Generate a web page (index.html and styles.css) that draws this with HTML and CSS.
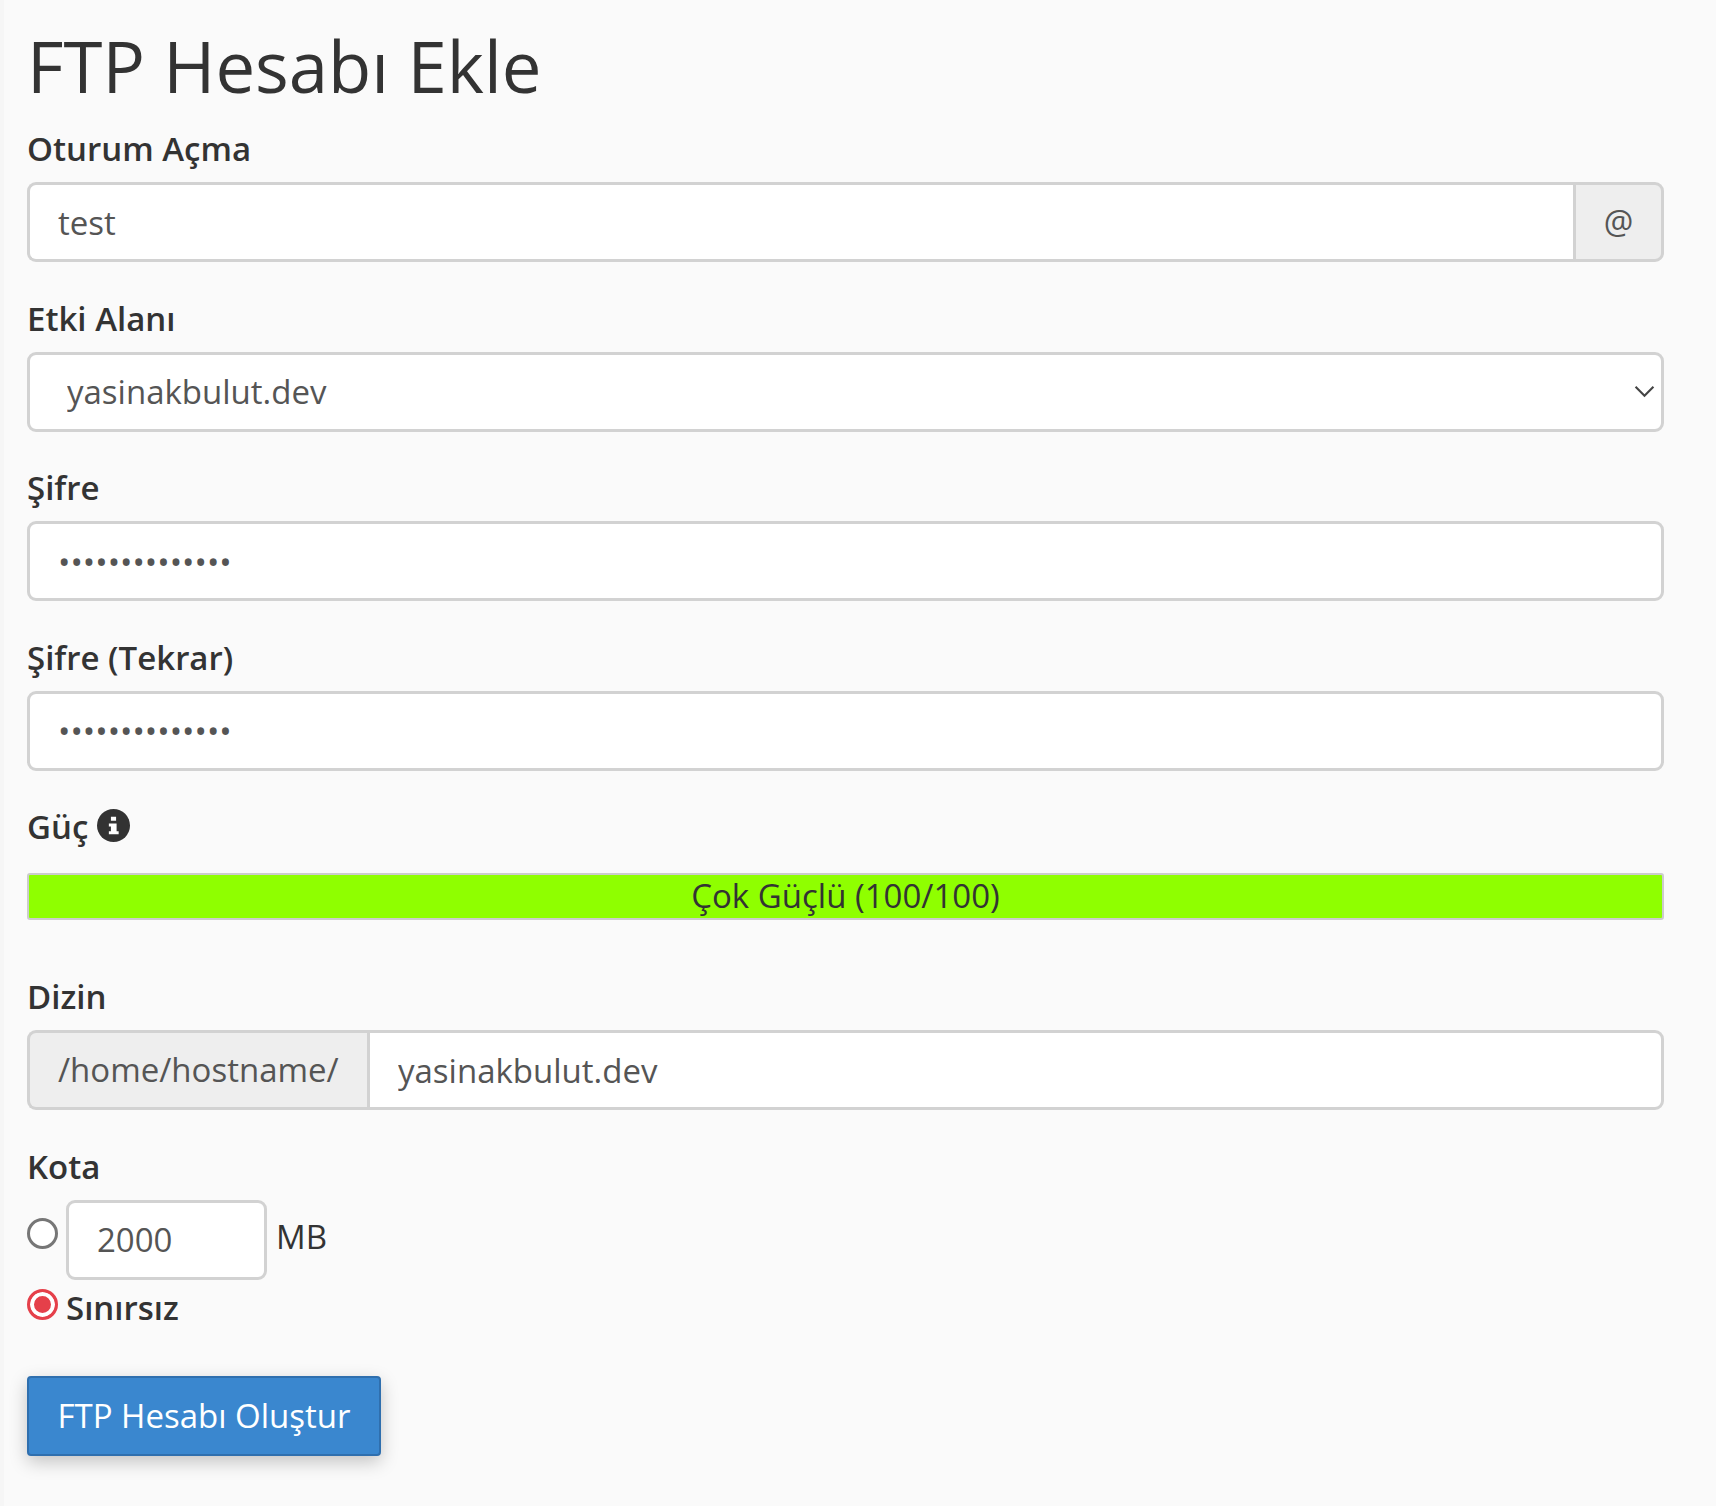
FILE: index.html
```html
<!DOCTYPE html>
<html lang="tr">
<head>
<meta charset="utf-8">
<title>FTP Hesabı Ekle</title>
<link rel="stylesheet" href="styles.css">
</head>
<body>
<main class="page">
  <h1 class="title">FTP Hesabı Ekle</h1>
  <form class="form">
    <div class="group">
      <label class="label" for="login">Oturum Açma</label>
      <div class="input-group">
        <input class="control joined-right" id="login" type="text" value="test">
        <span class="addon addon-right">@</span>
      </div>
    </div>
    <div class="group">
      <label class="label" for="domain">Etki Alanı</label>
      <div class="select-wrap">
        <select class="control select" id="domain"><option>yasinakbulut.dev</option></select>
        <svg class="chevron" viewBox="0 0 20 12" aria-hidden="true"><path d="M1.5 1.5 10 10l8.5-8.5" fill="none" stroke="#444" stroke-width="2"/></svg>
      </div>
    </div>
    <div class="group">
      <label class="label" for="pass">Şifre</label>
      <input class="control" id="pass" type="password" value="aaaaaaaaaaaaaa">
    </div>
    <div class="group">
      <label class="label" for="pass2">Şifre (Tekrar)</label>
      <input class="control" id="pass2" type="password" value="aaaaaaaaaaaaaa">
    </div>
    <div class="group group-strength">
      <div class="label label-icon">Güç
        <svg class="info" viewBox="0 0 32 32" aria-hidden="true">
          <circle cx="16" cy="16" r="16" fill="#333"/>
          <path d="M13.500 7.500h5v4h-5zM11.500 14H19v7.500h2v3H11.500v-3h2V17h-2z" fill="#fff"/>
        </svg>
      </div>
      <div class="meter">Çok Güçlü (100/100)</div>
    </div>
    <div class="group">
      <label class="label" for="dir">Dizin</label>
      <div class="input-group">
        <span class="addon addon-left">/home/hostname/</span>
        <input class="control joined-left" id="dir" type="text" value="yasinakbulut.dev">
      </div>
    </div>
    <div class="group group-quota">
      <div class="label">Kota</div>
      <div class="quota-row">
        <span class="radio"></span>
        <input class="control quota-input" type="text" value="2000" aria-label="Kota">
        <span class="unit">MB</span>
      </div>
      <div class="unlimited-row">
        <span class="radio radio-on"></span>
        <span class="unlimited">Sınırsız</span>
      </div>
    </div>
    <button class="btn" type="button">FTP Hesabı Oluştur</button>
  </form>
</main>
</body>
</html>
```
FILE: styles.css
```css
* { box-sizing: border-box; }
html, body { margin: 0; padding: 0; }
body {
  width: 1716px;
  height: 1506px;
  overflow: hidden;
  background: #fafafa;
  border-left: 4px solid #f6f6f6;
  color: #333;
  font-family: "Open Sans", "Noto Sans", sans-serif;
  font-size: 33px;
  line-height: 44px;
  font-variant-ligatures: none;
}
.page { padding: 0 52px 0 23px; }
.title {
  margin: 0;
  padding-top: 24px;
  font-size: 70.7px;
  font-weight: 400;
  line-height: 84px;
  height: 127px;
}
.form { display: flex; flex-direction: column; }
.group { margin-bottom: 34.6px; }
.label {
  display: block;
  height: 44px;
  margin-bottom: 11px;
  font-weight: 600;
  color: #333;
}
.control {
  display: block;
  width: 100%;
  height: 80px;
  padding: 0 28px;
  background: #fff;
  border: 3px solid #d2d2d2;
  border-radius: 9px;
  color: #555;
  font: 400 33px "Open Sans", "Noto Sans", sans-serif;
  outline: none;
}
.input-group { display: flex; }
.joined-right { flex: 1; border-radius: 9px 0 0 9px; border-right: 0; }
.joined-left { flex: 1; border-radius: 0 9px 9px 0; }
.addon {
  display: flex;
  align-items: center;
  height: 80px;
  background: #eee;
  border: 3px solid #d2d2d2;
  color: #555;
  font-size: 33px;
}
.addon-right {
  width: 91px;
  justify-content: center;
  border-radius: 0 9px 9px 0;
}
.addon-left {
  width: 340px;
  padding-left: 28px;
  border-right: 0;
  border-radius: 9px 0 0 9px;
}
.select-wrap { position: relative; }
.select { appearance: none; -webkit-appearance: none; padding-left: 37px; }
.chevron { position: absolute; right: 9px; top: 33px; width: 21px; height: 13px; }
.group-strength { margin-bottom: 55px; }
.label-icon { display: flex; align-items: center; gap: 9px; margin-bottom: 24px; }
.info { width: 33px; height: 33px; margin-top: -4px; }
.meter {
  height: 47px;
  line-height: 41px;
  text-align: center;
  background: #8fff00;
  border: 2px solid #ccc;
  border-radius: 3px;
  color: #333;
  font-size: 33px;
}
.quota-row { display: flex; align-items: center; height: 80px; }
.radio {
  flex: none;
  width: 31px;
  height: 31px;
  margin-right: 8px;
  border: 3px solid #767676;
  border-radius: 50%;
  background: #fff;
  margin-top: -12px;
}
.radio-on {
  border-color: #e5404a;
  background: #e5404a;
  box-shadow: inset 0 0 0 4px #fff;
  margin-top: -6px;
}
.quota-input { width: 201px; }
.unit { margin-left: 9px; margin-top: -6px; }
.unlimited-row { display: flex; align-items: center; height: 44px; margin-top: 6px; }
.unlimited { font-weight: 600; }
.group-quota { margin-bottom: 46px; }
.btn {
  align-self: flex-start;
  width: 354px;
  height: 80px;
  background: #3a87cf;
  border: 2px solid #2f6fae;
  border-radius: 4px;
  color: #fff;
  font: 400 33px "Open Sans", "Noto Sans", sans-serif;
  box-shadow: 0 6px 18px rgba(0, 0, 0, .22);
}
```
